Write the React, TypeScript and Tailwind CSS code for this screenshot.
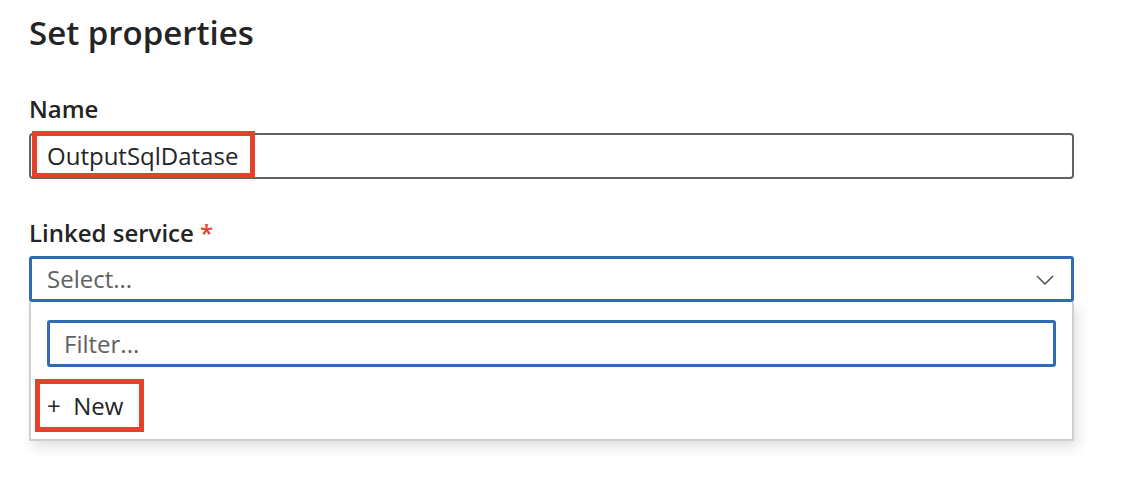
export default function App() {
  return (
    <div
      className="min-h-[482px] w-[1124px] bg-white pl-[29px] pt-[11px] text-[#242424]"
      style={{ fontFamily: '"Open Sans", "Noto Sans", sans-serif' }}
    >
      <h1 className="text-[33px] font-semibold leading-[44px]">Set properties</h1>

      <div className="mt-[40px] w-[1045px]">
        <label className="block text-[24px] font-semibold leading-[28px]">Name</label>
        <div className="relative mt-[10px] flex h-[46px] items-center rounded-[4px] border-2 border-[#616161] pl-[16px]">
          <span className="text-[24px]">OutputSqlDatase</span>
          <div className="absolute left-[1px] top-[-4px] h-[47px] w-[223px] border-[5px] border-[#e8412b]" />
        </div>
      </div>

      <div className="mt-[40px] w-[1045px]">
        <label className="block text-[24px] font-semibold leading-[28px]">
          Linked service <span className="text-[#e2432b]">*</span>
        </label>
        <div className="mt-[9px] flex h-[46px] items-center justify-between rounded-[3px] border-[3px] border-[#316bb8] pl-[15px] pr-[17px]">
          <span className="text-[24px] text-[#616161]">Select...</span>
          <svg width="18" height="10" viewBox="0 0 18 10" fill="none" className="mt-[2px]">
            <polyline points="1,1 9,9 17,1" stroke="#555" strokeWidth="1.6" />
          </svg>
        </div>
        <div className="border-x-2 border-b-2 border-[#cfcfcf] px-[16px] pb-[7px] pt-[18px] shadow-[4px_6px_12px_rgba(0,0,0,0.12)]">
          <div className="flex h-[47px] items-center rounded-[3px] border-[3px] border-[#316bb8] pl-[14px]">
            <span className="text-[24px] text-[#616161]">Filter...</span>
          </div>
          <div className="relative mt-[12px] flex h-[53px] items-center">
            <span className="text-[24px]">+&nbsp;&nbsp;New</span>
            <div className="absolute left-[-12px] top-0 h-[53px] w-[109px] border-[5px] border-[#e8412b]" />
          </div>
        </div>
      </div>
    </div>
  )
}
